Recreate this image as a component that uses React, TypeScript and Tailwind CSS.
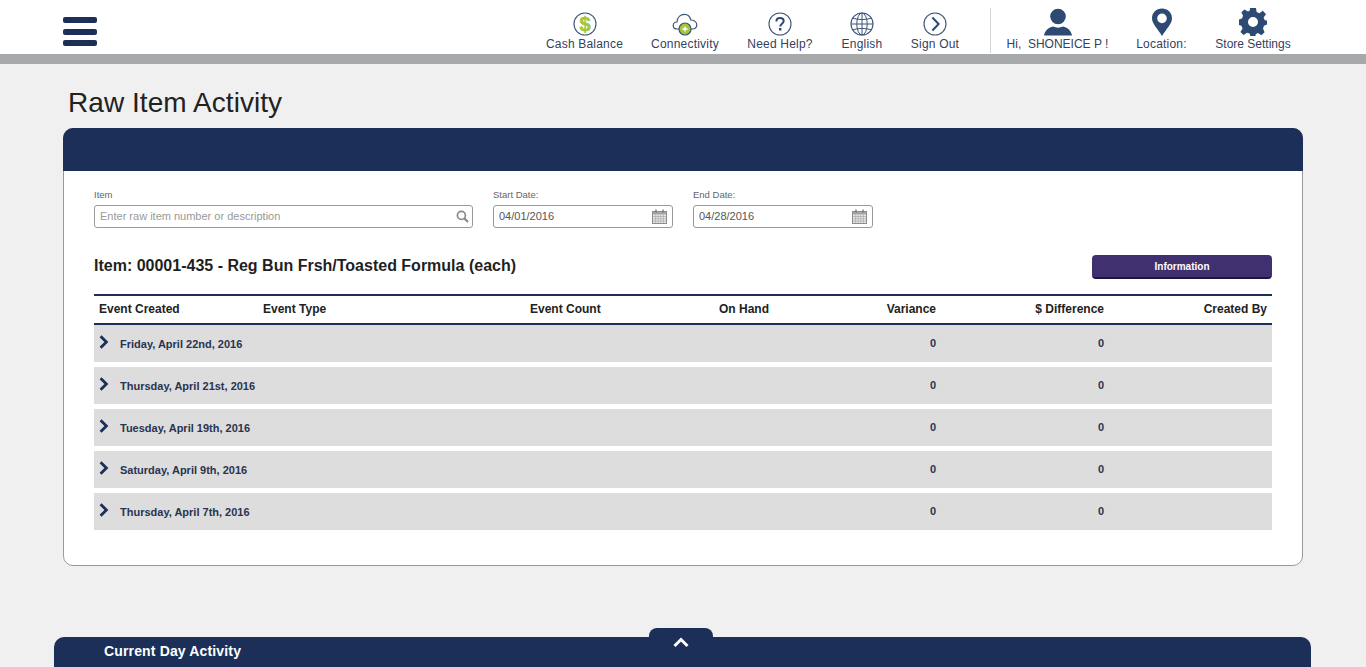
const navy = "#1c2f59";

function CashIcon() {
  return (
    <svg width="24" height="24" viewBox="0 0 24 24">
      <circle cx="12" cy="12" r="11" fill="#ffffff" stroke="#3d5478" strokeWidth="1.1" />
      <text x="12" y="18.8" textAnchor="middle" fontSize="20" fontWeight="700" fill="#a5c63b" stroke="#a5c63b" strokeWidth=".5" fontFamily="Liberation Sans">$</text>
    </svg>
  );
}

function CloudIcon() {
  return (
    <svg width="26" height="24" viewBox="0 0 26 24">
      <path d="M7 17H5.5C3 17 1.2 15.4 1.2 13.4C1.2 11.4 3 10 5 10C5.4 5.4 8.4 2.4 12.4 2.4C15.8 2.4 18 4.6 18.8 8C22 8 24.8 10 24.8 12.8C24.8 15.4 22.8 17 20 17H18.5" fill="none" stroke="#3d5478" strokeWidth="1.2" />
      <circle cx="13" cy="17" r="6" fill="#a5c63b" stroke="#3d5478" strokeWidth="1.2" />
      <path d="M13 14.4V19.6M10.4 17H15.6" stroke="#ffffff" strokeWidth="1.4" />
    </svg>
  );
}

function HelpIcon() {
  return (
    <svg width="24" height="24" viewBox="0 0 24 24">
      <circle cx="12" cy="12" r="11" fill="none" stroke="#3d5478" strokeWidth="1.1" />
      <path d="M8.4 9.4C8.4 7.2 10 6 12 6C14.2 6 15.7 7.2 15.7 9.1C15.7 11.6 12.2 11.8 12.2 14.6" fill="none" stroke="#2c4a73" strokeWidth="2" />
      <rect x="11" y="16" width="2.4" height="2.5" fill="#2c4a73" />
    </svg>
  );
}

function GlobeIcon() {
  return (
    <svg width="24" height="24" viewBox="0 0 24 24" fill="none" stroke="#3d5478" strokeWidth="1">
      <circle cx="12" cy="12" r="11" strokeWidth="1.1" />
      <ellipse cx="12" cy="12" rx="5.2" ry="11" />
      <path d="M1 12H23M2.8 6.2C8 8 16 8 21.2 6.2M2.8 17.8C8 16 16 16 21.2 17.8M12 1V23" />
    </svg>
  );
}

function SignOutIcon() {
  return (
    <svg width="24" height="24" viewBox="0 0 24 24" fill="none" stroke="#3d5478">
      <circle cx="12" cy="12" r="11" strokeWidth="1.1" />
      <path d="M9.4 5.5L15.6 12L9.4 18.5" strokeWidth="2" stroke="#2c4a73" />
    </svg>
  );
}

function UserIcon() {
  return (
    <svg width="28" height="28" viewBox="0 0 28 28" fill="#2c4a73">
      <circle cx="14" cy="8.5" r="7.8" />
      <path d="M0 27.5C1 22 5 19.5 9 18.5C12 20 16 20 19 18.5C23 19.5 27 22 28 27.5Z" />
    </svg>
  );
}

function PinIcon() {
  return (
    <svg width="22" height="28" viewBox="0 0 22 28">
      <path fillRule="evenodd" d="M11 28C7 21 1 16 1 10.2C1 4.6 5.4 .5 11 .5C16.6 .5 21 4.6 21 10.2C21 16 15 21 11 28ZM11 5.6A4.8 4.8 0 1 0 11 15.2A4.8 4.8 0 1 0 11 5.6Z" fill="#2c4a73" />
    </svg>
  );
}

function GearIcon() {
  return (
    <svg width="28" height="28" viewBox="0 0 28 28">
      <path fillRule="evenodd" fill="#2c4a73" d="M11 0H17L17.6 4L20.4 5.2L23.8 2.8L27 6.2L24.6 9.6L25.8 12.2L28 12.6V16.6L25 17.8L24 20.4L25.6 24.2L22.4 27.2L19 25L16.6 26.2V28H11.4L10.6 25.6L8 24.8L4.6 27L1.4 24L3.6 20.4L2.4 17.8L0 17V11.4L3 10.4L4 7.8L2.4 4.2L5.4 1.4L9 3.4L10.8 2.6ZM14 9A5 5 0 1 0 14 19A5 5 0 1 0 14 9Z" />
    </svg>
  );
}

function CalendarIcon() {
  return (
    <svg width="15" height="15" viewBox="0 0 15 15" className="shrink-0">
      <rect x=".5" y="2.5" width="14" height="12" fill="#e9e9e9" stroke="#8c8c8c" />
      <rect x="1" y="3" width="13" height="2.5" fill="#a5a5a5" />
      <path d="M1 7.5H14M1 9.8H14M1 12.1H14M3.6 5.5V14M6.2 5.5V14M8.8 5.5V14M11.4 5.5V14" stroke="#a8a8a8" strokeWidth=".7" />
      <path d="M4 .5V3.5M11 .5V3.5" stroke="#777777" strokeWidth="1.4" />
    </svg>
  );
}

function SearchIcon() {
  return (
    <svg width="13" height="13" viewBox="0 0 13 13" fill="none" stroke="#8a8a8a" className="shrink-0">
      <circle cx="5.4" cy="5.4" r="4" strokeWidth="1.7" />
      <path d="M8.4 8.4L12 12" strokeWidth="2.2" />
    </svg>
  );
}

function Chevron() {
  return (
    <svg width="10" height="14" viewBox="0 0 10 14" fill="none" stroke={navy} strokeWidth="2.8" className="shrink-0 -mt-[3px]">
      <path d="M1.6 1.2L7.4 7L1.6 12.8" />
    </svg>
  );
}

function NavItem({ icon, label, width, tall, tight }: { icon: React.ReactNode; label: string; width: string; tall?: boolean; tight?: boolean }) {
  return (
    <div className={`flex flex-col items-center ${width} ${tall ? "mt-[8px]" : "mt-[12px]"}`}>
      <div className={`flex items-end justify-center ${tall ? "h-[28px]" : "h-[24px]"}`}>{icon}</div>
      <div className={`mt-[1px] text-[12px] leading-[14px] text-[#33415f] whitespace-pre ${tight ? "tracking-normal" : "tracking-[0.2px]"}`}>{label}</div>
    </div>
  );
}

const rows = [
  { date: "Friday, April 22nd, 2016" },
  { date: "Thursday, April 21st, 2016" },
  { date: "Tuesday, April 19th, 2016" },
  { date: "Saturday, April 9th, 2016" },
  { date: "Thursday, April 7th, 2016" },
];

const gridCols = "grid grid-cols-[164px_267px_189px_100px_127px_168px_163px]";

export default function App() {
  return (
    <div className="relative h-[667px] overflow-hidden bg-[#f0f0f0] flex flex-col font-['Liberation_Sans',Arial,sans-serif]">
      {/* top bar */}
      <header className="h-[64px] shrink-0 bg-white border-b-[10px] border-[#a7a8aa] flex items-start pl-[63px] pr-[75px]">
        <div className="mt-[17px] flex flex-col gap-[5.5px] w-[34px]">
          <div className="h-[6px] rounded-[2px] bg-[#1c2f59]" />
          <div className="h-[6px] rounded-[2px] bg-[#1c2f59]" />
          <div className="h-[6px] rounded-[2px] bg-[#1c2f59]" />
        </div>
        <div className="ml-auto flex items-start gap-[28px]">
          <NavItem icon={<CashIcon />} label="Cash Balance" width="w-[77px]" />
          <NavItem icon={<CloudIcon />} label="Connectivity" width="w-[68px]" />
          <NavItem icon={<HelpIcon />} label="Need Help?" width="w-[66px]" />
          <NavItem icon={<GlobeIcon />} label="English" width="w-[42px]" />
          <NavItem icon={<SignOutIcon />} label="Sign Out" width="w-[48px]" />
          <div className="mt-[8px] h-[45px] w-px bg-[#d5d5d5] ml-[3px] -mr-[12px]" />
          <NavItem icon={<UserIcon />} label="Hi,  SHONEICE P !" width="w-[101px]" tall tight />
          <NavItem icon={<PinIcon />} label="Location:" width="w-[51px]" tall />
          <NavItem icon={<GearIcon />} label="Store Settings" width="w-[76px]" tall tight />
        </div>
      </header>

      <main className="px-[63px]">
        <h1 className="mt-[22px] ml-[5px] text-[28px] leading-[34px] tracking-[0.06px] text-[#222222]">Raw Item Activity</h1>

        <section className="mt-[8px] h-[438px] w-[1240px] rounded-[10px] border border-[#999999] bg-white">
          <div className="-mx-px -mt-px h-[43px] rounded-t-[10px] bg-[#1c2f59]" />
          <div className="pl-[30px] pr-[30px]">
            {/* filters */}
            <div className="mt-[18px] flex gap-[20px]">
              <div className="w-[379px]">
                <div className="text-[9.5px] leading-[12px] text-[#666666]">Item</div>
                <div className="mt-[4px] h-[23px] rounded-[3px] border border-[#999999] flex items-center justify-between pl-[5px] pr-[3px]">
                  <span className="text-[11px] text-[#999999]">Enter raw item number or description</span>
                  <SearchIcon />
                </div>
              </div>
              <div className="w-[180px]">
                <div className="text-[9.5px] leading-[12px] text-[#666666]">Start Date:</div>
                <div className="mt-[4px] h-[23px] rounded-[3px] border border-[#999999] flex items-center justify-between pl-[5px] pr-[5px]">
                  <span className="text-[11px] text-[#555555]">04/01/2016</span>
                  <CalendarIcon />
                </div>
              </div>
              <div className="w-[180px]">
                <div className="text-[9.5px] leading-[12px] text-[#666666]">End Date:</div>
                <div className="mt-[4px] h-[23px] rounded-[3px] border border-[#999999] flex items-center justify-between pl-[5px] pr-[5px]">
                  <span className="text-[11px] text-[#555555]">04/28/2016</span>
                  <CalendarIcon />
                </div>
              </div>
            </div>

            {/* item heading */}
            <div className="mt-[27px] flex items-center justify-between h-[24px]">
              <h2 className="pb-[2px] text-[16px] font-bold text-[#1f1f1f]">Item: 00001-435 - Reg Bun Frsh/Toasted Formula (each)</h2>
              <button className="h-[24px] w-[180px] rounded-[4px] bg-[#40306f] border-b-2 border-[#1e1440] text-[10px] font-bold text-white">Information</button>
            </div>

            {/* table */}
            <div className={`mt-[15px] ${gridCols} h-[31px] items-center pb-[2px] border-t-2 border-b-2 border-[#1c2f59] text-[12px] font-bold text-[#222222]`}>
              <div className="pl-[5px]">Event Created</div>
              <div className="pl-[5px]">Event Type</div>
              <div className="pl-[5px]">Event Count</div>
              <div className="pl-[5px] whitespace-nowrap">On Hand</div>
              <div className="pr-[5px] text-right">Variance</div>
              <div className="pr-[5px] text-right">$ Difference</div>
              <div className="pr-[5px] text-right">Created By</div>
            </div>
            <div className="flex flex-col gap-[5px]">
              {rows.map((row) => (
                <div key={row.date} className={`${gridCols} h-[37px] items-center bg-[#dddddd] text-[11px] font-bold text-[#2a3350]`}>
                  <div className="col-span-3 flex items-center pl-[5px]">
                    <Chevron />
                    <span className="ml-[11px] mt-[1px] whitespace-nowrap">{row.date}</span>
                  </div>
                  <div />
                  <div className="pr-[5px] text-right">0</div>
                  <div className="pr-[5px] text-right">0</div>
                  <div />
                </div>
              ))}
            </div>
          </div>
        </section>
      </main>

      {/* bottom drawer */}
      <footer className="absolute left-[54px] top-[637px] h-[30px] w-[1257px] rounded-t-[10px] bg-[#1c2f59] pl-[50px] pt-[5px] text-[14px] leading-[18px] tracking-[0.15px] font-bold text-white">
        Current Day Activity
      </footer>
      <div className="absolute left-[649px] top-[628px] h-[26px] w-[64px] rounded-t-[8px] bg-[#1c2f59] flex justify-center pt-[9px]">
        <svg width="16" height="11" viewBox="0 0 16 11" fill="none" stroke="#ffffff" strokeWidth="3"><path d="M1.5 9L8 2.5L14.5 9" /></svg>
      </div>
    </div>
  );
}
